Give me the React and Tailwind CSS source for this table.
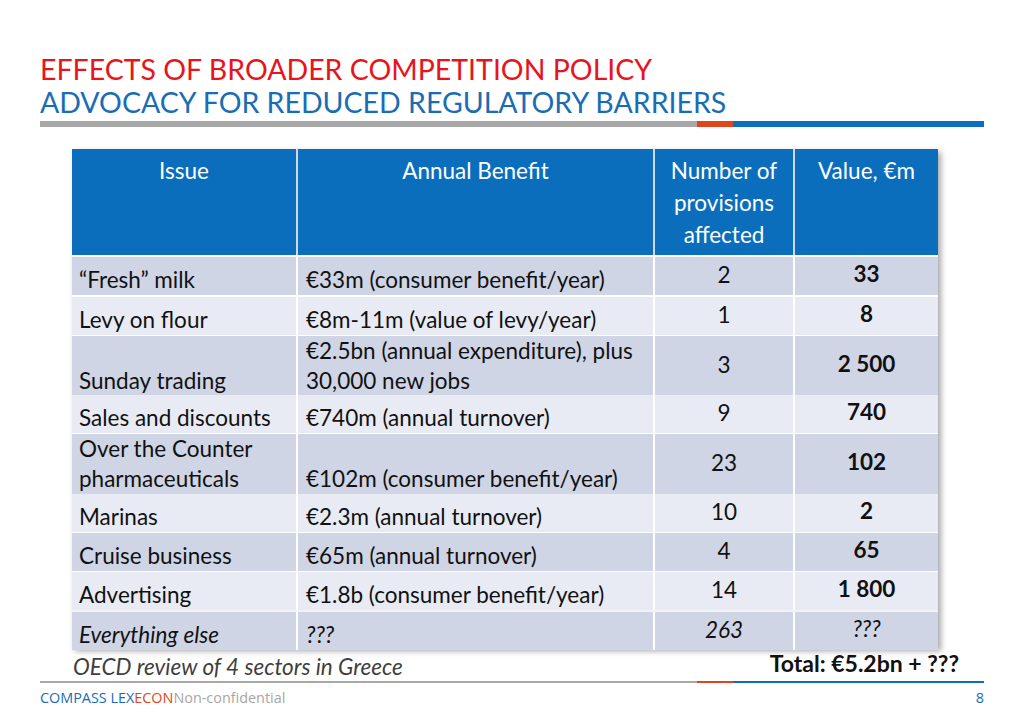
import React from "react";

const rows = [
  { issue: "“Fresh” milk", benefit: "€33m (consumer benefit/year)", n: "2", v: "33", h: "h-[40px]", dark: true },
  { issue: "Levy on flour", benefit: "€8m-11m (value of levy/year)", n: "1", v: "8", h: "h-[39px]" },
  { issue: "Sunday trading", benefit: "€2.5bn (annual expenditure), plus 30,000 new jobs", n: "3", v: "2 500", h: "h-[59px]", dark: true },
  { issue: "Sales and discounts", benefit: "€740m (annual turnover)", n: "9", v: "740", h: "h-[39px]" },
  { issue: "Over the Counter pharmaceuticals", benefit: "€102m (consumer benefit/year)", n: "23", v: "102", h: "h-[60px]", dark: true },
  { issue: "Marinas", benefit: "€2.3m (annual turnover)", n: "10", v: "2", h: "h-[39px]" },
  { issue: "Cruise business", benefit: "€65m (annual turnover)", n: "4", v: "65", h: "h-[39px]", dark: true },
  { issue: "Advertising", benefit: "€1.8b (consumer benefit/year)", n: "14", v: "1 800", h: "h-[39px]" },
];

const cols = "grid grid-cols-[224px_357px_140px_145px]";

const Row = ({ r, italic, last }) => {
  const bg = r.dark ? "bg-[#cfd5e5]" : "bg-[#e8ebf4]";
  const it = italic ? "italic" : "";
  return (
    <div className={`${cols} ${r.h} ${last ? "border-t-[3px] border-[#f2f2f4]" : "border-t-2 border-white"}`}>
      <div className={`${bg} ${it} flex items-end px-[7px] pb-0 leading-[30px]`}>{r.issue}</div>
      <div className={`${bg} ${it} border-l-2 border-white flex items-end px-[8px] pb-0 leading-[30px]`}>{r.benefit}</div>
      <div className={`${bg} ${it} border-l-2 border-white flex items-center justify-center pb-[3px]`}>{r.n}</div>
      <div className={`${bg} ${italic ? "italic" : "font-bold"} border-l-2 border-white flex items-center justify-center pb-[4px]`}>{r.v}</div>
    </div>
  );
};

const Bar = ({ h }) => (
  <div className={`flex ${h} w-[944px]`}>
    <div className="w-[657px] bg-[#a8a8a8]"></div>
    <div className="w-[36px] bg-[#e0461d]"></div>
    <div className="flex-1 bg-[#0d6ebe]"></div>
  </div>
);

export default function App() {
  return (
    <div className="w-[1024px] h-[724px] bg-white relative overflow-hidden font-['Lato',sans-serif] text-[#111]">
      <div className="pl-[40px] pt-[53px]">
        <div className="text-[28.5px] leading-[33px] text-[#e8141c]">
          EFFECTS OF BROADER COMPETITION POLICY
        </div>
        <div className="text-[28.5px] leading-[33px] text-[#1a6db3]">
          ADVOCACY FOR REDUCED REGULATORY BARRIERS
        </div>
        <div className="mt-[2px]">
          <Bar h="h-[6px]" />
        </div>
      </div>

      <div className="ml-[72px] mt-[22px] w-[866px] text-[22.5px] shadow-[3px_3px_6px_rgba(0,0,0,0.35)]">
        <div className={`${cols} h-[106px] bg-[#0b6ebd] text-white leading-[32px]`}>
          <div className="text-center pt-[6px]">Issue</div>
          <div className="text-center pt-[6px] border-l-2 border-[#cfd8ea]">Annual Benefit</div>
          <div className="text-center pt-[6px] border-l-2 border-[#cfd8ea]">Number of<br />provisions<br />affected</div>
          <div className="text-center pt-[6px] border-l-2 border-[#cfd8ea]">Value, €m</div>
        </div>
        {rows.map((r) => (
          <Row key={r.issue} r={r} />
        ))}
        <Row r={{ issue: "Everything else", benefit: "???", n: "263", v: "???", h: "h-[39px]", dark: true }} italic last />
      </div>

      <div className="flex justify-between items-start w-[886px] ml-[73px] mt-0">
        <div className="italic text-[22.5px] text-[#3f3f3f] leading-[28px] mt-[5px]">
          OECD review of 4 sectors in Greece
        </div>
        <div className="font-bold text-[23px] text-[#111] leading-[28px] mt-[1px]">Total: €5.2bn + ???</div>
      </div>

      <div className="pl-[40px]">
        <Bar h="h-[2px]" />
        <div className="flex justify-between w-[944px] mt-[6px] text-[14.4px] font-['Open_Sans',sans-serif] leading-[18px]">
          <div>
            <span className="text-[#1a6db3]">COMPASS LEX</span>
            <span className="text-[#e0461d]">ECON</span>
            <span className="text-[#a6a6a6]">Non-confidential</span>
          </div>
          <div className="text-[#1a6db3]">8</div>
        </div>
      </div>
    </div>
  );
}
